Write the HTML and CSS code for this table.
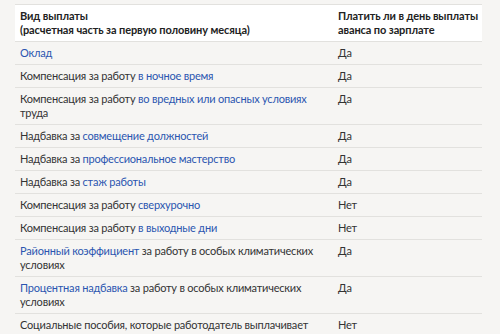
FILE: index.html
```html
<!DOCTYPE html>
<html lang="ru">
<head>
    <meta charset="UTF-8">
    <title>Выплаты в день аванса</title>
    <link rel="stylesheet" href="styles.css">
</head>
<body>
    <table class="pay-table">
        <thead>
            <tr>
                <th class="col-type">Вид выплаты<br>(расчетная часть за первую половину месяца)</th>
                <th class="col-pay">Платить ли в день выплаты аванса по зарплате</th>
            </tr>
        </thead>
        <tbody>
            <tr><td><a href="#">Оклад</a></td><td>Да</td></tr>
            <tr><td>Компенсация за работу <a href="#">в ночное время</a></td><td>Да</td></tr>
            <tr><td>Компенсация за работу <a href="#">во вредных или опасных условиях</a> труда</td><td>Да</td></tr>
            <tr><td>Надбавка за <a href="#">совмещение должностей</a></td><td>Да</td></tr>
            <tr><td>Надбавка за <a href="#">профессиональное мастерство</a></td><td>Да</td></tr>
            <tr><td>Надбавка за <a href="#">стаж работы</a></td><td>Да</td></tr>
            <tr><td>Компенсация за работу <a href="#">сверхурочно</a></td><td>Нет</td></tr>
            <tr><td>Компенсация за работу <a href="#">в выходные дни</a></td><td>Нет</td></tr>
            <tr><td><a href="#">Районный коэффициент</a> за работу в особых климатических условиях</td><td>Да</td></tr>
            <tr><td><a href="#">Процентная надбавка</a> за работу в особых климатических условиях</td><td>Да</td></tr>
            <tr><td>Социальные пособия, которые работодатель выплачивает</td><td>Нет</td></tr>
        </tbody>
    </table>
</body>
</html>
```

FILE: styles.css
```css
body {
    margin: 0;
    padding: 4px 0 0 15px;
    background-color: #f6f5f3;
    font-family: 'Lato', sans-serif;
    font-size: 11px;
    color: #333;
}

.pay-table {
    width: 467px;
    table-layout: fixed;
    border-collapse: collapse;
    border-top: 1px solid #e2e1de;
}

.pay-table th,
.pay-table td {
    box-sizing: border-box;
    text-align: left;
    vertical-align: top;
    padding: 4px 4px 4px 5px;
    line-height: 14px;
    border-bottom: 1px solid #e2e1de;
}

.pay-table td {
    letter-spacing: -0.2px;
}

.pay-table th {
    background-color: #fff;
    font-weight: 700;
    color: #222;
    letter-spacing: -0.1px;
}

.col-type {
    width: 318px;
}

.pay-table .col-pay {
    padding-right: 0;
}

.pay-table a {
    color: #2b55b0;
    text-decoration: none;
}
```
